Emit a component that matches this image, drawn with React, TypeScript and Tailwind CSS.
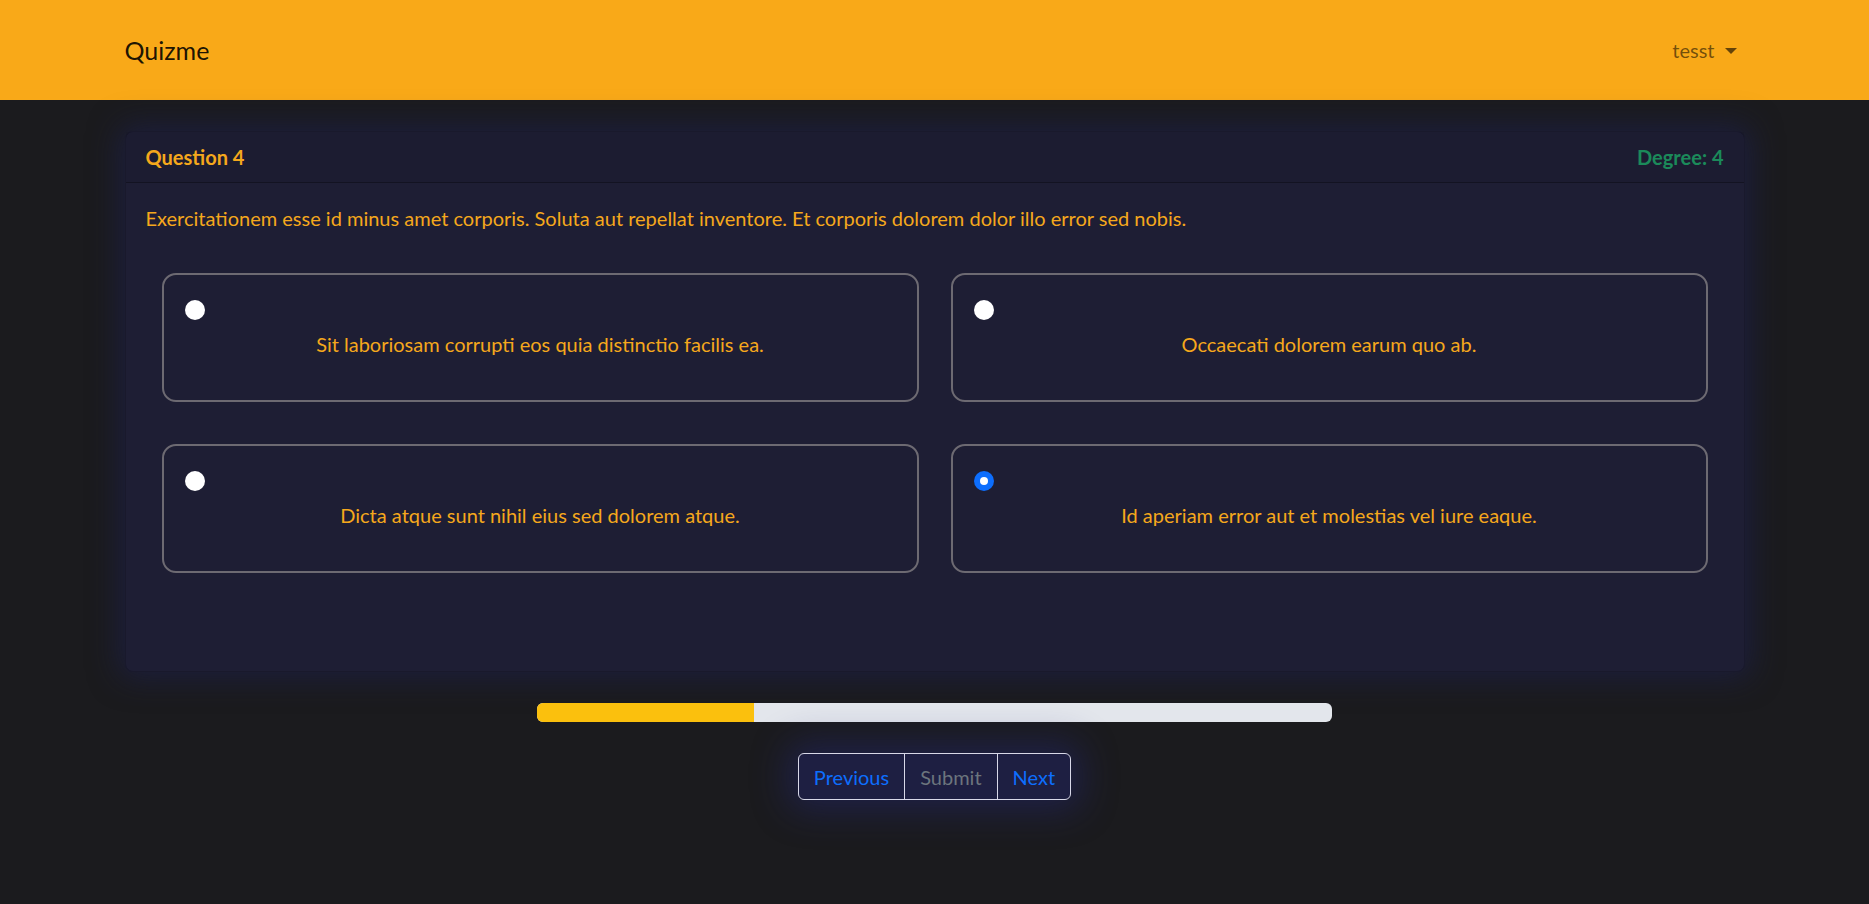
import { useState } from "react";

const answers = [
  "Sit laboriosam corrupti eos quia distinctio facilis ea.",
  "Occaecati dolorem earum quo ab.",
  "Dicta atque sunt nihil eius sed dolorem atque.",
  "Id aperiam error aut et molestias vel iure eaque.",
];

function Option({ text, checked, onPick }: { text: string; checked: boolean; onPick: () => void }) {
  return (
    <div
      onClick={onPick}
      className="flex flex-col border-[2.5px] border-[#6d6a72] rounded-[14px] cursor-pointer"
    >
      {checked ? (
        <span className="ml-[21px] mt-[25px] w-[20px] h-[20px] rounded-full bg-[#0d6efd] flex items-center justify-center">
          <span className="w-[8px] h-[8px] rounded-full bg-white" />
        </span>
      ) : (
        <span className="ml-[21px] mt-[25px] w-[20px] h-[20px] rounded-full bg-white" />
      )}
      <p className="mt-[9px] mb-[41px] text-center text-[20px] leading-[30px] text-[#f5a81c]">{text}</p>
    </div>
  );
}

export default function App() {
  const [picked, setPicked] = useState(3);

  return (
    <div className="min-h-screen bg-[#1b1b1e] font-['Lato',sans-serif]">
      <nav className="h-[100px] bg-[#f9a918]">
        <div className="w-[1650px] mx-auto px-[15px] h-full flex items-center justify-between">
          <span className="text-[25px] leading-[38px] text-black/90">Quizme</span>
          <button className="flex items-center gap-[10px] mr-[8px] text-[20px] text-black/55">
            tesst
            <span className="w-0 h-0 border-x-[6px] border-x-transparent border-t-[6px] border-t-black/60 mt-[2px]" />
          </button>
        </div>
      </nav>

      <div className="w-[1650px] mx-auto px-[15px] pt-[31px]">
        <div className="bg-[#1e1e34] border border-[#19192c] rounded-[8px] shadow-[0_0_30px_6px_rgba(30,32,85,0.55)]">
          <div className="flex justify-between items-center px-[20px] py-[10px] bg-black/5 border-b border-black/30 text-[20px] leading-[30px] font-bold">
            <span className="text-[#f5a81c]">Question 4</span>
            <span className="text-[#1b8a5a]">Degree: 4</span>
          </div>
          <div className="p-[20px]">
            <p className="text-[20px] leading-[30px] text-[#f5a81c]">
              Exercitationem esse id minus amet corporis. Soluta aut repellat inventore. Et corporis dolorem dolor illo error sed nobis.
            </p>
            <div className="grid grid-cols-2 gap-x-[32px] gap-y-[42px] px-[16px] mt-[40px] mb-[78px]">
              {answers.map((a, i) => (
                <Option key={i} text={a} checked={picked === i} onPick={() => setPicked(i)} />
              ))}
            </div>
          </div>
        </div>

        <div className="mx-auto mt-[31px] w-[795px] h-[19px] rounded-[6px] bg-[#e3e6ec] overflow-hidden flex">
          <div className="h-full bg-[#fbc00d]" style={{ width: "27.3%" }} />
        </div>

        <div className="flex justify-center mt-[31px]">
          <div className="flex h-[47px] border border-[#d8d8e8] rounded-[6px] bg-[#1e1f42] shadow-[0_0_36px_10px_rgba(35,40,125,0.45)] text-[20px]">
            <button className="px-[15px] text-[#0d6efd] border-r border-[#d8d8e8]">Previous</button>
            <button className="px-[15px] text-[#6c757d] border-r border-[#d8d8e8]">Submit</button>
            <button className="px-[15px] text-[#0d6efd]">Next</button>
          </div>
        </div>
      </div>
    </div>
  );
}
